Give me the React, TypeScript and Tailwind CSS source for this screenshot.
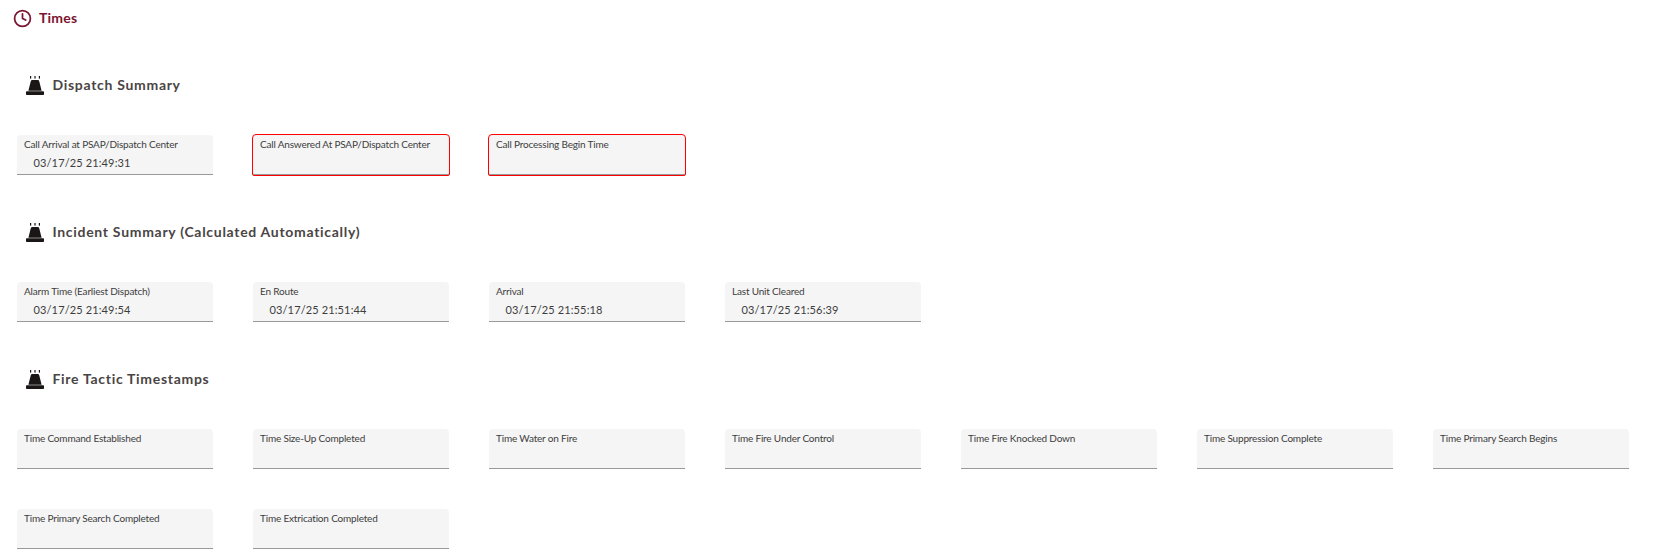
import { Clock } from "lucide-react";

const font = "font-['Lato','Carlito','Open_Sans',sans-serif]";

function SirenIcon() {
  return (
    <svg width="20" height="20" viewBox="0 0 20 20" className="shrink-0" fill="#1a1616">
      <path d="M3.4 15.7 5.7 6.4Q6 5 7.4 5h5.2q1.4 0 1.7 1.4l2.3 9.3z" />
      <rect x="1" y="16.2" width="18" height="3.8" rx="0.8" />
      <rect x="5" y="1" width="1.2" height="2.6" />
      <rect x="9.4" y="1" width="1.2" height="2.6" />
      <rect x="13.8" y="1" width="1.2" height="2.6" />
    </svg>
  );
}

function SectionTitle({ title }: { title: string }) {
  return (
    <div className="flex h-5 items-center gap-[7.5px] pl-[25px]">
      <SirenIcon />
      <h3 className="text-[14px] font-bold leading-5 tracking-[0.7px] text-[#4a4545]">{title}</h3>
    </div>
  );
}

function TimeField({ label, value, error }: { label: string; value?: string; error?: boolean }) {
  return (
    <div
      className={
        error
          ? "-mx-px -my-px h-[42px] w-[198px] rounded-t-[4px] rounded-b-[2px] border border-[#ff0000] bg-[#f5f5f5] pl-[7px] pt-[3px] shadow-[inset_0_-1px_0_#999999]"
          : "h-10 w-[196px] rounded-t-[4px] border-b border-[#999999] bg-[#f5f5f5] pl-[7px] pt-[3px]"
      }
    >
      <div className="text-[10px] leading-[12px] tracking-[-0.18px] text-[#3d3d3d]">{label}</div>
      {value && <div className="mt-[6px] pl-[9.5px] text-[11px] leading-[14px] tracking-[0.13px] text-[#3d3d3d]">{value}</div>}
    </div>
  );
}

export default function App() {
  return (
    <div className={`${font} h-[560px] w-[1669px] overflow-hidden bg-white`}>
      <div className="flex h-[36px] items-center gap-[7px] pl-[13px]">
        <Clock size={19} strokeWidth={2.2} color="#7b1530" />
        <h2 className="text-[14px] font-bold leading-4 tracking-[0.2px] text-[#7b1530]">Times</h2>
      </div>

      <div className="pt-[39px]">
        <SectionTitle title="Dispatch Summary" />
        <div className="flex gap-10 pl-[17px] pt-[40px]">
          <TimeField label="Call Arrival at PSAP/Dispatch Center" value="03/17/25 21:49:31" />
          <TimeField label="Call Answered At PSAP/Dispatch Center" error />
          <TimeField label="Call Processing Begin Time" error />
        </div>
      </div>

      <div className="pt-[47px]">
        <SectionTitle title="Incident Summary (Calculated Automatically)" />
        <div className="flex gap-10 pl-[17px] pt-[40px]">
          <TimeField label="Alarm Time (Earliest Dispatch)" value="03/17/25 21:49:54" />
          <TimeField label="En Route" value="03/17/25 21:51:44" />
          <TimeField label="Arrival" value="03/17/25 21:55:18" />
          <TimeField label="Last Unit Cleared" value="03/17/25 21:56:39" />
        </div>
      </div>

      <div className="pt-[47px]">
        <SectionTitle title="Fire Tactic Timestamps" />
        <div className="flex flex-wrap gap-x-10 gap-y-10 pl-[17px] pt-[40px]">
          <TimeField label="Time Command Established" />
          <TimeField label="Time Size-Up Completed" />
          <TimeField label="Time Water on Fire" />
          <TimeField label="Time Fire Under Control" />
          <TimeField label="Time Fire Knocked Down" />
          <TimeField label="Time Suppression Complete" />
          <TimeField label="Time Primary Search Begins" />
          <TimeField label="Time Primary Search Completed" />
          <TimeField label="Time Extrication Completed" />
        </div>
      </div>
    </div>
  );
}
